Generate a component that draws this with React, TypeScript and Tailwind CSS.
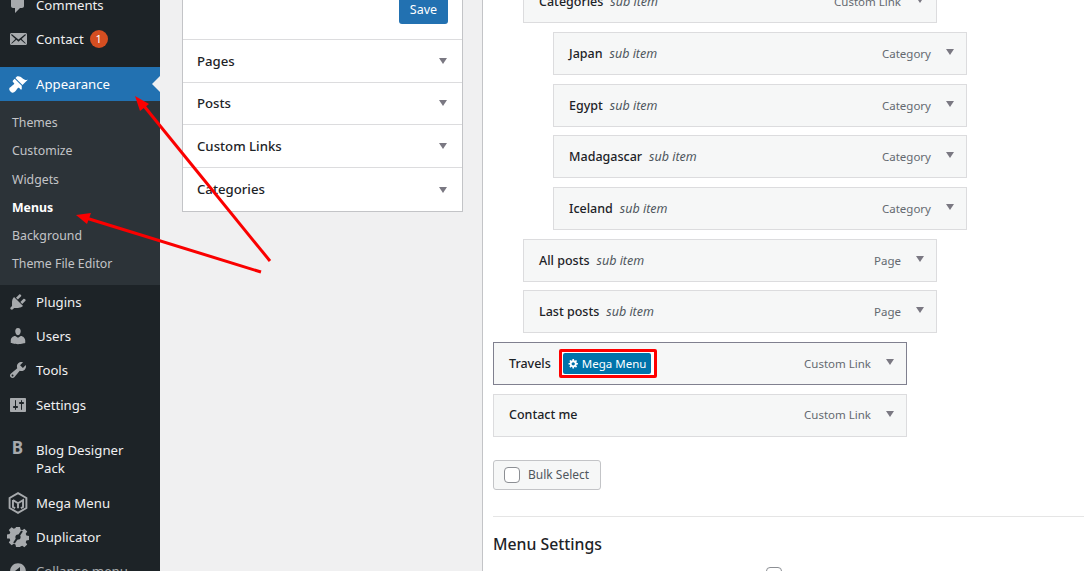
const F = "font-['Noto_Sans',sans-serif]";

function Ico({ d, c = "#a7aaad", s = 20 }: { d: string; c?: string; s?: number }) {
  return (
    <svg width={s} height={s} viewBox="0 0 20 20" fill={c} fillRule="evenodd" className="shrink-0">
      <path d={d} />
    </svg>
  );
}

const P = {
  comments: "M5 2h9c1.1 0 2 .9 2 2v7c0 1.1-.9 2-2 2h-2l-5 5v-5H5c-1.1 0-2-.9-2-2V4c0-1.1.9-2 2-2z",
  mail: "M19 14.5v-9c0-.83-.67-1.5-1.5-1.5H3.49c-.83 0-1.5.67-1.5 1.5v9c0 .83.67 1.5 1.5 1.5H17.5c.83 0 1.5-.67 1.5-1.5zm-1.31-9.11c.33.33.15.67-.03.84L13.6 9.95l3.9 4.06c.12.14.2.36.06.51-.13.16-.43.15-.56.05l-4.37-3.73-2.14 1.95-2.13-1.95-4.37 3.73c-.13.1-.43.11-.56-.05-.14-.15-.06-.37.06-.51l3.9-4.06-4.06-3.72c-.18-.17-.36-.51-.03-.84s.67-.17.95.07l6.24 5.04 6.25-5.04c.28-.24.62-.4.95-.07z",
  brush: "M14.48 11.06L7.41 3.99l1.5-1.5c.5-.56 2.3-.47 3.51.32 1.21.8 1.43 1.28 2.91 2.1 1.18.64 2.45 1.26 4.45.85zm-.71.71L6.7 4.7 4.93 6.47c-.39.39-.39 1.02 0 1.41l1.06 1.06c.39.39.39 1.03 0 1.42-.6.6-1.43 1.11-2.21 1.69-.35.26-.7.53-1.01.84C1.43 13.23.99 14.52 1.37 15.8c.38 1.27 1.63 2.61 2.88 2.83 1.07.18 2.27-.47 3.1-1.3.31-.31.58-.66.84-1.01.58-.78 1.09-1.61 1.69-2.21.39-.39 1.03-.39 1.42 0l1.06 1.06c.39.39 1.02.39 1.41 0z",
  plugin: "M13.11 4.36L9.87 7.6 8 5.73l3.24-3.24c.35-.34 1.05-.2 1.56.32.52.51.66 1.21.31 1.55zm-8 1.77l.91-1.12 9.01 9.01-1.19.84c-.71.71-2.63 1.16-3.82 1.16H6.14L4.9 17.26c-.59.59-1.54.59-2.12 0-.59-.58-.59-1.53 0-2.12l1.24-1.24v-3.88c0-1.13.4-3.19 1.09-3.89zm7.26 3.97l3.24-3.24c.34-.35 1.04-.21 1.55.31.52.51.66 1.21.31 1.55l-3.24 3.25z",
  users: "M10 9.25c-2.27 0-2.73-3.44-2.73-3.44C7 4.02 7.82 2 9.97 2c2.16 0 2.98 2.02 2.71 3.81 0 0-.41 3.44-2.68 3.44zm0 2.57L12.72 10c2.39 0 4.52 2.33 4.52 4.53v2.49s-3.65 1.13-7.24 1.13c-3.65 0-7.24-1.13-7.24-1.13v-2.49c0-2.25 1.94-4.48 4.47-4.48z",
  tools: "M16.68 9.77c-1.34 1.34-3.3 1.67-4.95.99l-5.41 6.52c-.99.99-2.59.99-3.58 0s-.99-2.59 0-3.57l6.52-5.42c-.68-1.65-.35-3.61.99-4.95 1.28-1.28 3.12-1.62 4.72-1.06l-2.89 2.89 2.82 2.82 2.86-2.87c.53 1.58.18 3.39-1.08 4.65zM3.81 16.21c.4.39 1.04.39 1.43 0 .4-.4.4-1.04 0-1.43-.39-.4-1.03-.4-1.43 0-.39.39-.39 1.03 0 1.43z",
  settings: "M18 16V4c0-.55-.45-1-1-1H3c-.55 0-1 .45-1 1v12c0 .55.45 1 1 1h14c.55 0 1-.45 1-1zM8 11h1c.55 0 1 .45 1 1s-.45 1-1 1H8v1.5c0 .28-.22.5-.5.5s-.5-.22-.5-.5V13H6c-.55 0-1-.45-1-1s.45-1 1-1h1V5.5c0-.28.22-.5.5-.5s.5.22.5.5V11zm5-2h-1c-.55 0-1-.45-1-1s.45-1 1-1h1V5.5c0-.28.22-.5.5-.5s.5.22.5.5V7h1c.55 0 1 .45 1 1s-.45 1-1 1h-1v5.5c0 .28-.22.5-.5.5s-.5-.22-.5-.5V9z",
  gear: "M18 12h-2.18c-.17.7-.44 1.35-.81 1.93l1.54 1.54-2.1 2.1-1.54-1.54c-.58.36-1.23.63-1.91.79V19H8v-2.18c-.68-.16-1.33-.43-1.91-.79l-1.54 1.54-2.12-2.12 1.54-1.54c-.36-.58-.63-1.23-.79-1.91H1V9.03h2.17c.16-.7.44-1.35.8-1.94L2.43 5.55l2.1-2.1 1.54 1.54c.58-.37 1.24-.64 1.93-.81V2h3v2.18c.68.16 1.33.43 1.91.79l1.54-1.54 2.12 2.12-1.54 1.54c.36.59.64 1.24.8 1.94H18V12zm-8.5 1.5c1.66 0 3-1.34 3-3s-1.34-3-3-3-3 1.34-3 3 1.34 3 3 3z",
  collapse: "M10 2.16c4.33 0 7.84 3.51 7.84 7.84s-3.51 7.84-7.84 7.84-7.84-3.51-7.84-7.84S5.67 2.16 10 2.16zM12 14V6l-5 4z",
};

function MegaIcon() {
  return (
    <svg width="24" height="24" viewBox="0 0 20 20" fill="none" stroke="#a7aaad" strokeWidth="1.6" className="shrink-0">
      <path d="M10 1.8l7 4v8.400l-7 4-7-4V5.800z" />
      <path d="M5.800 7.600l4.200 2.600 4.200-2.600v5.600l-1.800 1M5.800 7.600v5.600l1.800 1M10 10.200v4.200" />
    </svg>
  );
}

function DupIcon() {
  return (
    <svg width="22" height="22" viewBox="0 0 22 22" className="shrink-0">
      <path fill="#a7aaad" fillRule="evenodd" d="M9 1h4l.5 2.6 1.7.7 2.2-1.5 2.8 2.8-1.5 2.2.7 1.7 2.6.5v4l-2.6.5-.7 1.7 1.5 2.2-2.8 2.8-2.2-1.5-1.7.7L13 21H9l-.5-2.6-1.7-.7-2.2 1.5-2.8-2.8 1.5-2.2-.7-1.7L0 12.500v-4l2.600-.5.7-1.700-1.500-2.200 2.800-2.800 2.200 1.500 1.700-.7z" />
      <path stroke="#1d2327" strokeWidth="2" d="M7 17l8-12" />
      <circle cx="11" cy="11" r="2.600" fill="#1d2327" />
    </svg>
  );
}

function MenuRow({ icon, label, h = "h-[34.33px]" }: { icon: React.ReactNode; label: string; h?: string }) {
  return (
    <div className={`flex items-center ${h} text-[#f0f0f1]`}>
      <div className="w-[36px] flex justify-center pr-[1px] shrink-0">{icon}</div>
      <span className="text-[13.2px] leading-[18px] pr-2">{label}</span>
    </div>
  );
}

function Sidebar() {
  const subs = ["Themes", "Customize", "Widgets", "Menus", "Background", "Theme File Editor"];
  return (
    <aside className="w-[160px] shrink-0 bg-[#1d2327] -mt-[12px] h-[600px] flex flex-col">
      <MenuRow icon={<Ico d={P.comments} />} label="Comments" />
      <div className="flex items-center h-[34px] text-[#f0f0f1]">
        <div className="w-[36px] flex justify-center pr-[1px] shrink-0"><Ico d={P.mail} /></div>
        <span className="text-[13.2px] leading-[18px]">Contact</span>
        <span className="ml-[6px] w-[18px] h-[18px] rounded-full bg-[#d54e21] text-white text-[11px] leading-[18px] text-center">1</span>
      </div>
      <div className="h-[10.67px]" />
      <div className="relative flex items-center h-[34px] bg-[#2271b1] text-white">
        <div className="w-[36px] flex justify-center pr-[1px] shrink-0"><Ico d={P.brush} c="#ffffff" /></div>
        <span className="text-[13.2px] leading-[18px]">Appearance</span>
        <span className="absolute right-0 top-[9px] border-y-[8px] border-r-[8px] border-y-transparent border-r-[#f0f0f1]" />
      </div>
      <div className="bg-[#2c3338] h-[184px] pt-[8.500px] flex flex-col">
        {subs.map((s) => (
          <div key={s} className={`h-[28.200px] flex items-center pl-[12px] text-[12.300px] ${s === "Menus" ? "font-bold text-white" : "text-[#c3c4c7]"}`}>
            {s}
          </div>
        ))}
      </div>
      <MenuRow icon={<Ico d={P.plugin} />} label="Plugins" />
      <MenuRow icon={<Ico d={P.users} />} label="Users" />
      <MenuRow icon={<Ico d={P.tools} />} label="Tools" />
      <MenuRow icon={<Ico d={P.settings} />} label="Settings" />
      <div className="h-[11px]" />
      <div className="flex h-[52.500px] items-center text-[#f0f0f1]">
        <div className="w-[36px] flex justify-center pr-[1px] self-start pt-[5px] shrink-0 font-bold text-[#a7aaad] text-[17px] leading-[20px]">B</div>
        <span className="text-[13.2px] leading-[18px] pr-2">Blog Designer Pack</span>
      </div>
      <MenuRow icon={<MegaIcon />} label="Mega Menu" />
      <MenuRow icon={<DupIcon />} label="Duplicator" />
      <div className="flex items-center h-[34px] text-[#a7aaad]">
        <div className="w-[36px] flex justify-center pr-[1px] shrink-0"><Ico d={P.collapse} /></div>
        <span className="text-[13.2px] leading-[18px]">Collapse menu</span>
      </div>
    </aside>
  );
}

function Caret({ className = "" }: { className?: string }) {
  return <span className={`w-0 h-0 border-x-[4.500px] border-t-[6px] border-x-transparent border-t-[#7a7882] ${className}`} />;
}

function LeftPanel() {
  const rows = ["Pages", "Posts", "Custom Links", "Categories"];
  return (
    <div className="w-[281px] ml-[22px] -mt-[20px] h-[232px] border-x border-b border-[#c3c4c7] bg-white flex flex-col shrink-0">
      <div className="h-[60px] border-b border-[#dcdcde] flex items-end justify-end pr-[14px] pb-[15px]">
        <div className="w-[49px] h-[29px] bg-[#2271b1] rounded-[3px] text-white text-[12.500px] leading-[30px] text-center">Save</div>
      </div>
      {rows.map((r, i) => (
        <div key={r} className={`h-[43px] flex items-center justify-between pl-[14px] pr-[15px] ${i < 3 ? "border-b border-[#dcdcde]" : ""}`}>
          <span className="text-[13.200px] font-medium text-[#1d2327] pt-[1.500px]">{r}</span>
          <Caret />
        </div>
      ))}
    </div>
  );
}

function Item({ ml, title, sub, type, active, children }: { ml: string; title: string; sub?: boolean; type: string; active?: boolean; children?: React.ReactNode }) {
  return (
    <div className={`${ml} w-[414px] h-[43px] shrink-0 border flex items-center bg-[#f6f7f7] pl-[15px] pr-[12px] ${active ? "border-[#80808f]" : "border-[#dcdcde]"}`}>
      <span className="text-[12.500px] font-medium text-[#1d2327] pt-[1.500px]">{title}</span>
      {sub && <span className="ml-[7px] text-[12.500px] italic text-[#50575e] pt-[1.500px]">sub item</span>}
      {children}
      <span className="ml-auto text-[11.500px] text-[#646970] mr-[15px]">{type}</span>
      <Caret className="-mt-[3px]" />
    </div>
  );
}

function RightPanel() {
  return (
    <div className="ml-[19px] flex-1 border-l border-[#c3c4c7] bg-white pl-[10px] -mt-[19.670px] h-[600px]">
      <div className="flex flex-col gap-[8.670px]">
        <Item ml="ml-[30px]" title="Categories" sub type="Custom Link" />
        <Item ml="ml-[60px]" title="Japan" sub type="Category" />
        <Item ml="ml-[60px]" title="Egypt" sub type="Category" />
        <Item ml="ml-[60px]" title="Madagascar" sub type="Category" />
        <Item ml="ml-[60px]" title="Iceland" sub type="Category" />
        <Item ml="ml-[30px]" title="All posts" sub type="Page" />
        <Item ml="ml-[30px]" title="Last posts" sub type="Page" />
        <Item ml="" title="Travels" type="Custom Link" active>
          <div className="ml-[8px] border-[3px] border-[#ff0000] rounded-[2px] pl-[1px] pr-[3px] py-[1px] bg-white">
            <div className="h-[21px] w-[88px] bg-[#0073aa] rounded-[2px] flex items-center pl-[5px] gap-[3px] text-white text-[11.500px]">
              <Ico d={P.gear} c="#ffffff" s={11} />
              Mega Menu
            </div>
          </div>
        </Item>
        <Item ml="" title="Contact me" type="Custom Link" />
      </div>
      <div className="mt-[23px] w-[108px] h-[30px] border border-[#c3c4c7] rounded-[3px] bg-[#f6f7f7] flex items-center pl-[10px] gap-[8px]">
        <span className="w-[16px] h-[16px] border border-[#8c8f94] rounded-[4px] bg-white" />
        <span className="text-[12px] text-[#50575e] pt-[1px]">Bulk Select</span>
      </div>
      <div className="mt-[26px] border-t border-[#e5e5e5]" />
      <h3 className="mt-[16px] text-[15.800px] leading-[22px] font-medium text-[#1d2327]">Menu Settings</h3>
      <div className="mt-[12px] flex items-start text-[12.500px] leading-[16px] text-[#3c434a]">
        <span className="w-[282px] pt-[2px]">Auto add pages</span>
        <span className="w-[16px] h-[16px] border border-[#8c8f94] rounded-[4px] bg-white" />
        <span className="ml-[8px] pt-[2px]">Automatically add new top-level pages to this menu</span>
      </div>
    </div>
  );
}

function Arrows() {
  return (
    <svg className="absolute inset-0 pointer-events-none" width="1084" height="571" viewBox="0 0 1084 571">
      <path d="M270 261L144 106" stroke="#fa0000" strokeWidth="3" fill="none" />
      <path d="M135 96L149 104 140 111z" fill="#fa0000" />
      <path d="M261 272L86 218" stroke="#fa0000" strokeWidth="3" fill="none" />
      <path d="M76 215L91 213 87 224z" fill="#fa0000" />
    </svg>
  );
}

export default function App() {
  return (
    <div className={`relative w-[1084px] h-[571px] overflow-hidden bg-[#f0f0f1] flex items-start ${F}`}>
      <Sidebar />
      <LeftPanel />
      <RightPanel />
      <Arrows />
    </div>
  );
}
